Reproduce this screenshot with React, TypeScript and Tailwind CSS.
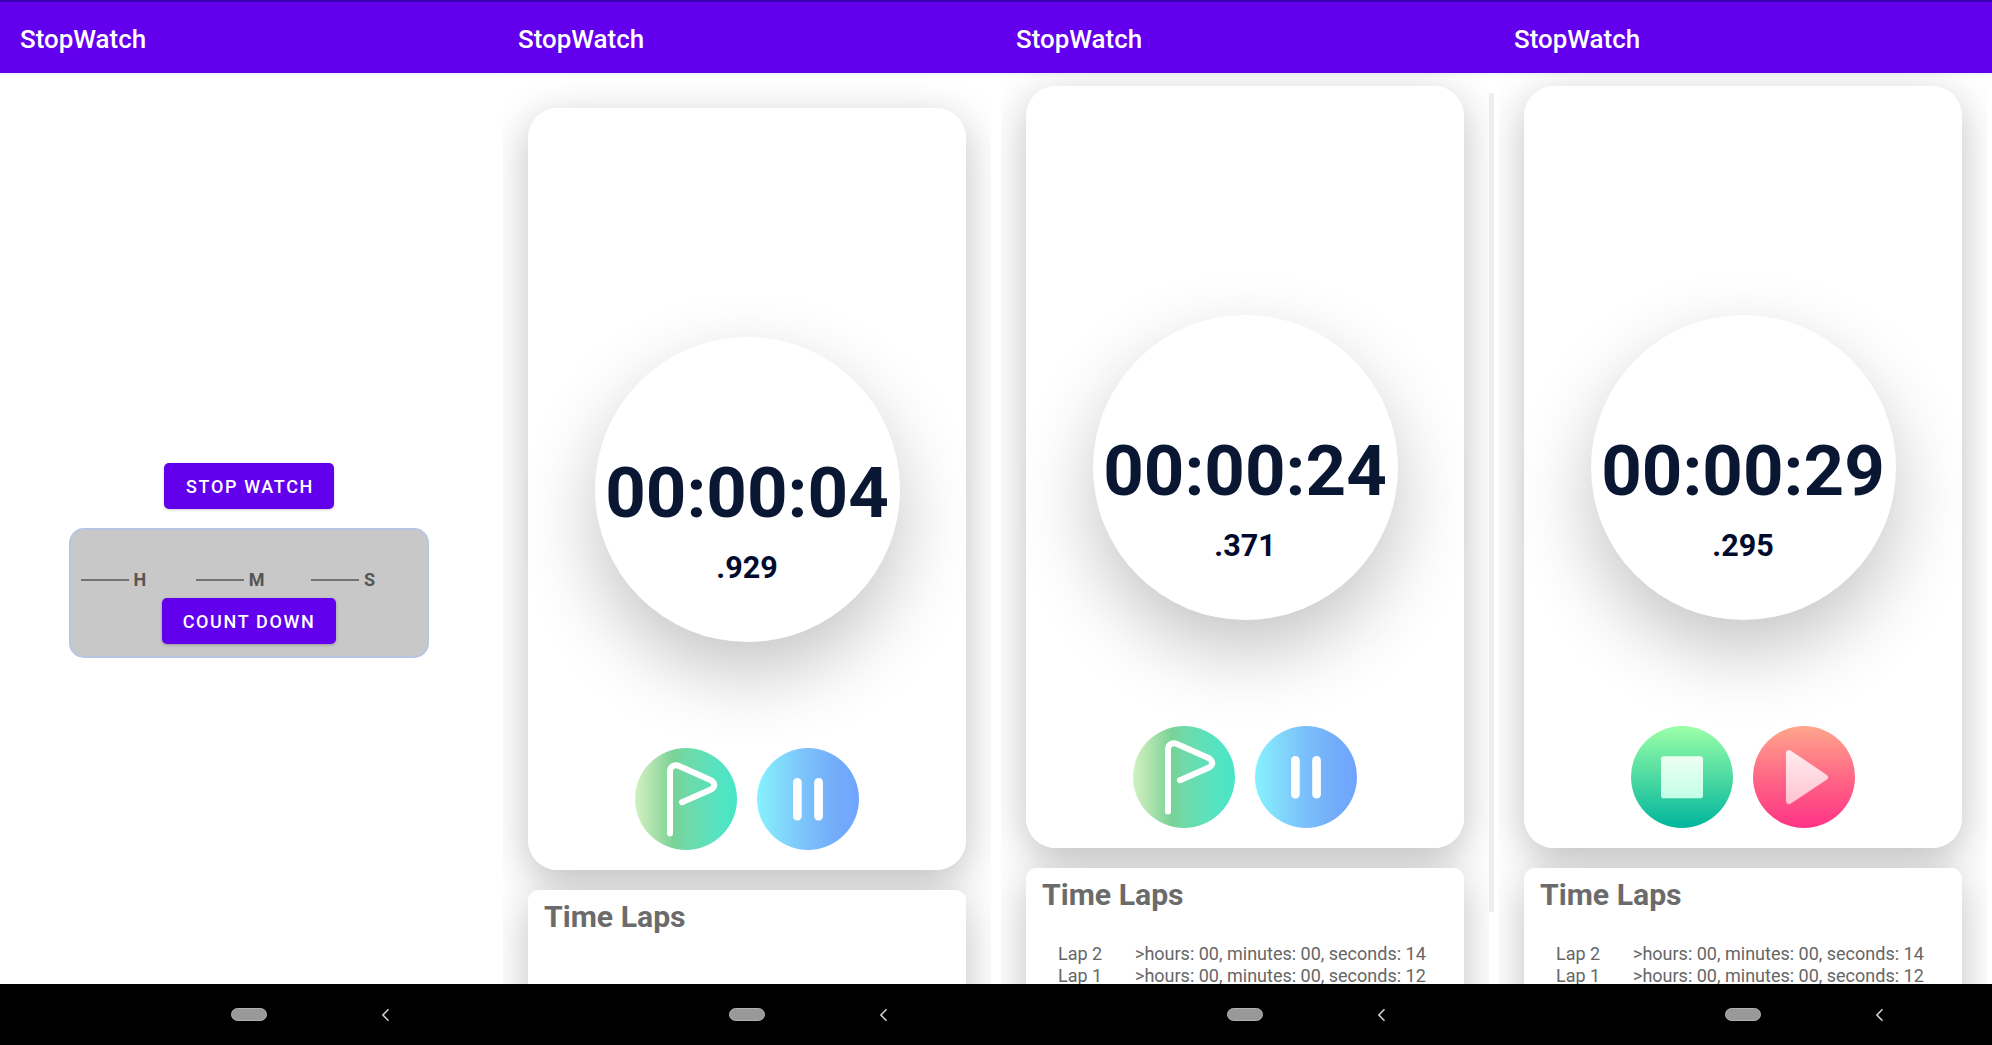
import React from "react";

function AppBar() {
  return (
    <header className="relative z-20 flex h-[73px] w-full shrink-0 items-center border-t-2 border-[#3700b3] bg-[#6200ee] pl-5 shadow-[0_1px_5px_rgba(0,0,0,0.08)]">
      <h1 className="mt-[2px] text-[25.900px] leading-8 font-medium text-white">StopWatch</h1>
    </header>
  );
}

function NavBar() {
  return (
    <footer className="relative z-20 grid h-[61px] shrink-0 grid-cols-[231px_36px_1fr] items-center bg-black">
      <div />
      <div className="h-[13px] rounded-full border border-[#b0b0b0] bg-[#999]" />
      <svg className="ml-[114px] h-[14px] w-[10px]" viewBox="0 0 10 14" fill="none" stroke="#d0d0d0" strokeWidth="1.6">
        <path d="M7.500 1.200 1.900 7 7.500 12.800" />
      </svg>
    </footer>
  );
}

function Phone({ children }: { children: React.ReactNode }) {
  return (
    <section className="flex h-full w-[498px] flex-col overflow-hidden bg-white">
      <AppBar />
      <main className="min-h-0 flex-1">{children}</main>
      <NavBar />
    </section>
  );
}

function FlagIcon() {
  return (
    <svg className="size-[102px]" viewBox="0 0 102 102" fill="none">
      <defs>
        <linearGradient id="flag" x1="0" x2="1" y1="0" y2="0">
          <stop offset="0" stopColor="#ccf4c2" />
          <stop offset="0.1" stopColor="#c0e8b5" />
          <stop offset="0.38" stopColor="#78d296" />
          <stop offset="0.5" stopColor="#70d9a8" />
          <stop offset="0.8" stopColor="#57e3c1" />
          <stop offset="1" stopColor="#46e6c6" />
        </linearGradient>
      </defs>
      <circle cx="51" cy="51" r="51" fill="url(#flag)" />
      <path
        d="M35 85.5V23.5C35 18.5 39.5 16 44 18L76 32.3Q82.500 37 76 41.500L47 54.200"
        stroke="white"
        strokeWidth="6"
        strokeLinecap="round"
        strokeLinejoin="round"
      />
    </svg>
  );
}

function PauseIcon() {
  return (
    <svg className="size-[102px]" viewBox="0 0 102 102">
      <defs>
        <linearGradient id="pause" x1="0" x2="1" y1="0" y2="0">
          <stop offset="0" stopColor="#86f2ff" />
          <stop offset="0.25" stopColor="#82d8fb" />
          <stop offset="0.5" stopColor="#7abffb" />
          <stop offset="0.78" stopColor="#73acf9" />
          <stop offset="1" stopColor="#70a4ff" />
        </linearGradient>
      </defs>
      <circle cx="51" cy="51" r="51" fill="url(#pause)" />
      <rect x="36" y="30" width="8.700" height="42.500" rx="4.350" fill="white" />
      <rect x="57.200" y="30" width="8.700" height="42.500" rx="4.350" fill="white" />
    </svg>
  );
}

function StopIcon() {
  return (
    <svg className="size-[102px]" viewBox="0 0 102 102">
      <defs>
        <linearGradient id="stop" x1="0" x2="0" y1="0" y2="1">
          <stop offset="0" stopColor="#9bffa8" />
          <stop offset="1" stopColor="#00b59c" />
        </linearGradient>
        <linearGradient id="stopMark" x1="0" x2="0" y1="0" y2="1">
          <stop offset="0" stopColor="#edfff2" />
          <stop offset="1" stopColor="#c3ffe8" />
        </linearGradient>
      </defs>
      <circle cx="51" cy="51" r="51" fill="url(#stop)" />
      <rect x="30" y="30.200" width="42" height="42" rx="2.800" fill="url(#stopMark)" />
    </svg>
  );
}

function PlayIcon() {
  return (
    <svg className="size-[102px]" viewBox="0 0 102 102">
      <defs>
        <linearGradient id="play" x1="0" x2="0" y1="0" y2="1">
          <stop offset="0" stopColor="#ffa68c" />
          <stop offset="0.55" stopColor="#ff6285" />
          <stop offset="1" stopColor="#ff3386" />
        </linearGradient>
        <linearGradient id="playMark" x1="0" x2="0" y1="0" y2="1">
          <stop offset="0" stopColor="#ffecef" />
          <stop offset="1" stopColor="#ffc3d0" />
        </linearGradient>
      </defs>
      <circle cx="51" cy="51" r="51" fill="url(#play)" />
      <path
        d="M33 27.300Q33 25.300 34.700 24.300Q36.300 23.800 37.800 24.700L73.500 48.700Q76.600 51.200 73.500 53.700L37.800 77.600Q36.300 78.600 34.700 78Q33 77 33 75Z"
        fill="url(#playMark)"
      />
    </svg>
  );
}

type Lap = { name: string; time: string };

const laps: Lap[] = [
  { name: "Lap 2", time: ">hours: 00, minutes: 00, seconds: 14" },
  { name: "Lap 1", time: ">hours: 00, minutes: 00, seconds: 12" },
];

type TimerProps = {
  time: string;
  millis: string;
  running: boolean;
  scrolled?: boolean;
  scrollbar?: boolean;
  laps?: Lap[];
};

function Timer({ time, millis, running, scrolled, scrollbar, laps = [] }: TimerProps) {
  return (
    <div className="relative h-full">
      <div className="mx-[5px] h-full overflow-hidden">
        <div className={scrolled ? "isolate px-[25px] pt-[13px]" : "isolate px-[25px] pt-[35px]"}>
          <article className="relative h-[762px] rounded-[30px] bg-white before:absolute before:inset-0 before:-z-10 before:rounded-[30px] before:shadow-[0_12px_42px_rgba(0,0,0,0.25)]">
            <div className="flex h-full flex-col items-center pt-[229px]">
              <div className="flex size-[305px] shrink-0 flex-col items-center rounded-full bg-white pt-[114px] shadow-[0_31px_76px_rgba(0,0,0,0.23)]">
                <p className="text-[70.800px] leading-[83px] font-bold whitespace-nowrap text-[#0a1733]">{time}</p>
                <p className="mt-[16px] text-[30.500px] leading-9 font-bold text-[#000b2e]">{millis}</p>
              </div>
              <div className="mt-auto mb-5 flex gap-5">
                {running ? <FlagIcon /> : <StopIcon />}
                {running ? <PauseIcon /> : <PlayIcon />}
              </div>
            </div>
          </article>
          <article className="relative mt-5 h-[300px] rounded-[11px] bg-white px-4 pt-[9px] before:absolute before:inset-0 before:-z-10 before:rounded-[11px] before:shadow-[0_12px_42px_rgba(0,0,0,0.25)]">
            <h2 className="text-[30.200px] leading-9 font-bold text-[#6b6b6b]">Time Laps</h2>
            <ul className="mt-[30px] pl-4 text-[18px] leading-[21.500px] text-[#666]">
              {laps.map((lap) => (
                <li key={lap.name} className="flex">
                  <span className="w-[77px]">{lap.name}</span>
                  <span className="whitespace-nowrap">{lap.time}</span>
                </li>
              ))}
            </ul>
          </article>
        </div>
      </div>
      {scrollbar && <div className="absolute top-5 right-0 h-[819px] w-[5px] bg-[#eee]" />}
    </div>
  );
}

function Field({ label }: { label: string }) {
  return (
    <div className="flex w-[115.300px] shrink-0 items-center gap-[5px]">
      <div className="h-[1.500px] w-12 bg-[#737373]" />
      <span className="text-[18px] leading-5 font-bold text-[#555]">{label}</span>
    </div>
  );
}

function Home() {
  return (
    <div className="flex flex-col items-center pt-[390px]">
      <button className="h-[46px] w-[170px] rounded-[5px] bg-[#6200ee] pt-px pl-[2px] text-[18px] font-medium tracking-[1.650px] text-white shadow-[0_1px_3px_rgba(0,0,0,0.2)]">
        STOP WATCH
      </button>
      <div className="mt-[19px] flex h-[130px] w-[360px] flex-col items-center rounded-[15px] border-[2.500px] border-[#b8c5e2] bg-[#c8c8c8] pt-[40px]">
        <div className="flex w-full pl-[9.500px]">
          <Field label="H" />
          <Field label="M" />
          <Field label="S" />
        </div>
        <button className="mt-[8px] h-[46px] w-[174px] rounded-[5px] bg-[#6200ee] pt-px text-[18px] font-medium tracking-[1.650px] text-white shadow-[0_1px_3px_rgba(0,0,0,0.25)]">
          COUNT DOWN
        </button>
      </div>
    </div>
  );
}

export default function App() {
  return (
    <div className="flex h-[1045px] w-[1992px] overflow-hidden bg-white font-[Roboto,sans-serif]">
      <Phone>
        <Home />
      </Phone>
      <Phone>
        <Timer time="00:00:04" millis=".929" running />
      </Phone>
      <Phone>
        <Timer time="00:00:24" millis=".371" running scrolled scrollbar laps={laps} />
      </Phone>
      <Phone>
        <Timer time="00:00:29" millis=".295" running={false} scrolled laps={laps} />
      </Phone>
    </div>
  );
}
